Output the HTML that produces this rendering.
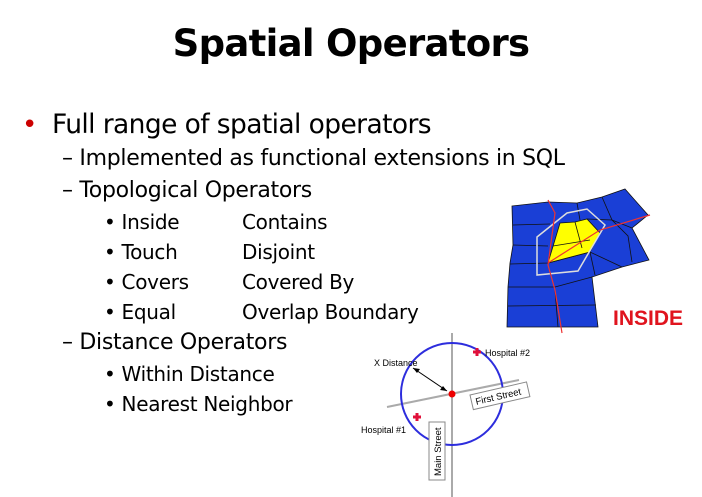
<!DOCTYPE html>
<html><head><style>
body{margin:0;width:702px;height:497px;background:#fff;position:relative;overflow:hidden;font-family:"DejaVu Sans","Liberation Sans",sans-serif;color:#000}
.t{position:absolute;white-space:nowrap}
h1{position:absolute;left:0;width:702px;top:22px;margin:0;text-align:center;font:bold 37px "DejaVu Sans",sans-serif;letter-spacing:-0.7px}
.l1{font-size:26.5px;letter-spacing:-0.6px}
.l2{font-size:22px;letter-spacing:-0.3px}
.l3{font-size:20px;letter-spacing:-0.3px}
</style></head><body>
<h1>Spatial Operators</h1>
<div class="t" style="left:22px;top:110px;color:#c00;font-size:26px">•</div>
<div class="t l1" style="left:52px;top:109px">Full range of spatial operators</div>
<div class="t l2" style="left:62px;top:146px">– Implemented as functional extensions in SQL</div>
<div class="t l2" style="left:62px;top:178px">– Topological Operators</div>
<div class="t l3" style="left:104px;top:210px">• Inside</div><div class="t l3" style="left:242px;top:210px">Contains</div>
<div class="t l3" style="left:104px;top:240px">• Touch</div><div class="t l3" style="left:242px;top:240px">Disjoint</div>
<div class="t l3" style="left:104px;top:270px">• Covers</div><div class="t l3" style="left:242px;top:270px">Covered By</div>
<div class="t l3" style="left:104px;top:300px">• Equal</div><div class="t l3" style="left:242px;top:300px">Overlap Boundary</div>
<div class="t l2" style="left:62px;top:330px">– Distance Operators</div>
<div class="t l3" style="left:104px;top:362px">• Within Distance</div>
<div class="t l3" style="left:104px;top:392px">• Nearest Neighbor</div>
<svg width="702" height="497" style="position:absolute;left:0;top:0">
<polygon points="512,206 548,202 577,203 602,197 625,189 648,215 632,228 649,260 622,267 592,277 598,327 507,327 508,287 510,263 513,245" fill="#1a3fd6" stroke="#111" stroke-width="0.8"/>
<g stroke="#111" stroke-width="0.8" fill="none">
<polyline points="513,225 550,224"/>
<polyline points="513,245 548,246"/>
<polyline points="510,264 548,263 590,252 622,267"/>
<polyline points="508,287 555,287 592,277"/>
<polyline points="508,306 596,305"/>
<polyline points="577,203 580,220"/>
<polyline points="602,197 612,220 628,236 632,262"/>
<polyline points="587,219 612,220 632,228"/>
<polyline points="590,252 595,275"/>
<polyline points="555,290 558,327"/>
</g>
<polygon points="560,223 575,222 587,219 600,233 590,252 548,263" fill="#ffff00" stroke="#111" stroke-width="0.8"/>
<polyline points="575,222 582,248" fill="none" stroke="#111" stroke-width="0.8"/>
<polyline points="553,246 590,240" fill="none" stroke="#111" stroke-width="0.8"/>
<polygon points="537,237 567,213 587,209 605,225 578,271 537,275" fill="none" stroke="#ddd" stroke-width="1.5"/>
<polyline points="548,200 555,213 548,265 555,290 562,333" fill="none" stroke="#e33" stroke-width="1.2"/>
<polyline points="548,263 600,230 650,215" fill="none" stroke="#e33" stroke-width="1.2"/>
<text x="613" y="325" font-family="Liberation Sans,sans-serif" font-weight="bold" font-size="21" fill="#e0141e">INSIDE</text>
<line x1="452" y1="333" x2="452" y2="497" stroke="#aaa" stroke-width="2"/>
<line x1="387" y1="407" x2="519" y2="380" stroke="#aaa" stroke-width="2"/>
<circle cx="452" cy="394" r="51" fill="none" stroke="#2d2ddd" stroke-width="2"/>
<circle cx="452" cy="394" r="3.5" fill="#e00"/>
<line x1="413" y1="368" x2="447" y2="391" stroke="#000" stroke-width="1"/>
<polygon points="413,368 420,369 417,373" fill="#000"/><polygon points="447,391 440,390 443,386" fill="#000"/>
<text x="374" y="366" font-family="Liberation Sans,sans-serif" font-size="9">X Distance</text>
<path d="M473,352h8M477,348v8" stroke="#e0103a" stroke-width="3"/>
<text x="485" y="356" font-family="Liberation Sans,sans-serif" font-size="9">Hospital #2</text>
<path d="M413,417h8M417,413v8" stroke="#e0103a" stroke-width="3"/>
<text x="361" y="433" font-family="Liberation Sans,sans-serif" font-size="9">Hospital #1</text>
<g transform="translate(470,395) rotate(-13)"><rect x="0" y="0" width="58" height="15" fill="#fff" stroke="#888"/><text x="4" y="11" font-family="Liberation Sans,sans-serif" font-size="9.5">First Street</text></g>
<g transform="translate(429,480) rotate(-90)"><rect x="0" y="0" width="58" height="16" fill="#fff" stroke="#888"/><text x="4" y="12" font-family="Liberation Sans,sans-serif" font-size="9.5">Main Street</text></g>
</svg>
</body></html>
